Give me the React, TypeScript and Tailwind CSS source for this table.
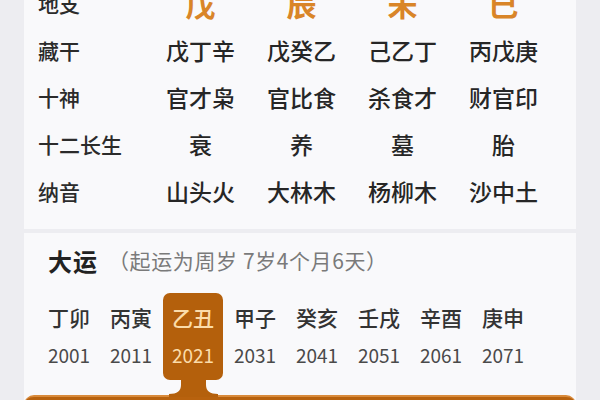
import React from "react";

const font = { fontFamily: '"Noto Sans CJK SC", "Noto Sans", sans-serif' };

const rows: { label: string; values: string[] }[] = [
  { label: "藏干", values: ["戊丁辛", "戊癸乙", "己乙丁", "丙戊庚"] },
  { label: "十神", values: ["官才枭", "官比食", "杀食才", "财官印"] },
  { label: "十二长生", values: ["衰", "养", "墓", "胎"] },
  { label: "纳音", values: ["山头火", "大林木", "杨柳木", "沙中土"] },
];

const dayun = [
  { gz: "丁卯", year: "2001" },
  { gz: "丙寅", year: "2011" },
  { gz: "乙丑", year: "2021", active: true },
  { gz: "甲子", year: "2031" },
  { gz: "癸亥", year: "2041" },
  { gz: "壬戌", year: "2051" },
  { gz: "辛酉", year: "2061" },
  { gz: "庚申", year: "2071" },
];

export default function App() {
  return (
    <div className="w-[600px] h-[400px] overflow-hidden bg-[#ededf1] px-[24px]" style={font}>
      {/* pillars card */}
      <div className="-mt-[28px] pt-[8px] pb-[14px] pl-[14px] bg-[#f9f9fb]">
        <div className="grid grid-cols-[112px_101px_101px_101px_101px] h-[47px] items-center">
          <span className="text-[21px] font-medium text-[#2b2b2b]">地支</span>
          {["戊", "辰", "未", "巳"].map((c) => (
            <span key={c} className="text-center text-[30px] font-bold text-[#d98528]">
              {c}
            </span>
          ))}
        </div>
        {rows.map((r) => (
          <div
            key={r.label}
            className="grid grid-cols-[112px_101px_101px_101px_101px] h-[47px] items-center"
          >
            <span className="text-[21px] font-medium text-[#2b2b2b]">{r.label}</span>
            {r.values.map((v, i) => (
              <span key={i} className="text-center text-[23px] font-medium text-[#262626]">
                {v}
              </span>
            ))}
          </div>
        ))}
      </div>

      {/* dayun card */}
      <div className="mt-[4px] bg-[#f9f9fb] pt-[14px]">
        <div className="flex items-center h-[28px] pl-[24px]">
          <span className="text-[24px] font-bold text-[#222] tracking-[1px]">大运</span>
          <span className="ml-[10px] text-[21px] tracking-[0.6px] text-[#7a7a7a]">
            （起运为周岁 7岁4个月6天）
          </span>
        </div>
        <div className="mt-[18px] pl-[14px] grid grid-cols-[repeat(8,62px)]">
          {dayun.map((d) => (
            <div key={d.year} className="relative flex justify-center">
              <div
                className={
                  d.active
                    ? "w-[60px] h-[87px] rounded-[7px] bg-[#b4600c] flex flex-col items-center text-[#fbdcaa]"
                    : "w-[60px] h-[87px] flex flex-col items-center"
                }
              >
                <span
                  className={
                    d.active
                      ? "mt-[10px] h-[28px] leading-[28px] text-[21px] font-medium"
                      : "mt-[10px] h-[28px] leading-[28px] text-[21px] font-medium text-[#333]"
                  }
                >
                  {d.gz}
                </span>
                <span
                  className={
                    d.active
                      ? "mt-[12px] h-[24px] leading-[24px] text-[19px]"
                      : "mt-[12px] h-[24px] leading-[24px] text-[19px] text-[#4a4a4a]"
                  }
                >
                  {d.year}
                </span>
              </div>
              {d.active && (
                <svg
                  className="absolute left-1/2 -translate-x-1/2 top-[86px]"
                  width="60"
                  height="18"
                  viewBox="0 0 60 18"
                >
                  <path
                    d="M18 0 H43 V6 C43 12 47 15 55 15 V18 H6 V15 C14 15 18 12 18 6 Z"
                    fill="#b4600c"
                  />
                </svg>
              )}
            </div>
          ))}
        </div>
        <div className="mt-[15px] h-[20px] rounded-t-[10px] bg-[#b8620e] border-t-[2px] border-[#d98a3a]" />
      </div>
    </div>
  );
}
